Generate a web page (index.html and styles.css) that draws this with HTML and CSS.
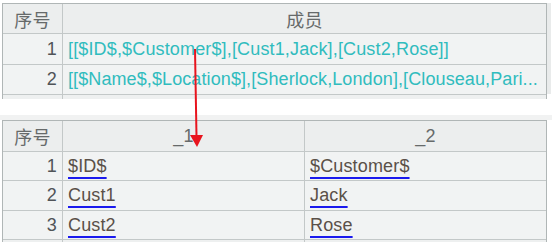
FILE: index.html
```html
<!DOCTYPE html>
<html lang="zh">
<head>
<meta charset="utf-8">
<title>序号 成员</title>
<link rel="stylesheet" href="styles.css">
</head>
<body>
<div class="page">
  <div class="frame frame-top">
    <div class="tbl tbl-two">
      <div class="cell head">序号</div>
      <div class="cell head">成员</div>
      <div class="cell num">1</div>
      <div class="cell val teal">[[$ID$,$Customer$],[Cust1,Jack],[Cust2,Rose]]</div>
      <div class="cell num">2</div>
      <div class="cell val teal tight">[[$Name$,$Location$],[Sherlock,London],[Clouseau,Pari...</div>
      <div class="cell stub"></div>
      <div class="cell stub"></div>
    </div>
    <div class="strip"></div>
  </div>

  <div class="frame frame-bottom">
    <div class="tbl tbl-three">
      <div class="cell head">序号</div>
      <div class="cell head">_1</div>
      <div class="cell head">_2</div>
      <div class="cell num">1</div>
      <div class="cell val"><span class="link">$ID$</span></div>
      <div class="cell val"><span class="link">$Customer$</span></div>
      <div class="cell num">2</div>
      <div class="cell val"><span class="link">Cust1</span></div>
      <div class="cell val"><span class="link">Jack</span></div>
      <div class="cell num">3</div>
      <div class="cell val"><span class="link">Cust2</span></div>
      <div class="cell val"><span class="link">Rose</span></div>
      <div class="cell stub"></div>
      <div class="cell stub"></div>
      <div class="cell stub"></div>
    </div>
  </div>

  <svg class="arrow" width="552" height="242" viewBox="0 0 552 242">
    <line x1="195" y1="49" x2="196.5" y2="137" stroke="#e8141e" stroke-width="2"/>
    <polygon points="190,135 203,135 197,147" fill="#e8141e"/>
  </svg>
</div>
</body>
</html>
```

FILE: styles.css
```css
html, body {
  margin: 0;
  padding: 0;
  background: #ffffff;
}

.page {
  position: relative;
  width: 552px;
  height: 242px;
  overflow: hidden;
  font-family: "Liberation Sans", "Noto Sans CJK SC", sans-serif;
  font-size: 18px;
  letter-spacing: 0.15px;
}

.frame {
  display: flex;
  padding-left: 2px;
}

.frame-top {
  padding-top: 3px;
  height: 96px;
  overflow: hidden;
}

.frame-bottom {
  margin-top: 16px;
  padding-top: 5px;
  background: linear-gradient(#f1f2f2, #f1f2f2) no-repeat 0 0 / 100% 5px;
}

.strip {
  width: 4px;
  height: 91px;
  background: #e9ebeb;
}

.tbl {
  display: grid;
  width: 543px;
  gap: 1px;
  background: #c3c8c8;
  border: 1px solid #b0b6b6;
  border-bottom: 0;
}

.tbl-two {
  grid-template-columns: 59px 483px;
  grid-template-rows: 29px 30px 29px 4px;
}

.tbl-three {
  grid-template-columns: 59px 241px 241px;
  grid-template-rows: 30px 28px 29px 28px 2px;
}

.cell {
  background: #f1f3f3;
  display: flex;
  align-items: center;
  white-space: nowrap;
  overflow: hidden;
}

.head {
  background: #eceeee;
  color: #666a6a;
  justify-content: center;
}

.num {
  justify-content: flex-end;
  padding-right: 5px;
  color: #505458;
}

.val {
  padding-left: 5px;
  color: #5a5048;
}

.teal {
  color: #30bcbe;
}

.tight {
  letter-spacing: 0.1px;
}

.link {
  text-decoration: underline;
  text-decoration-color: #1a1aee;
  text-decoration-thickness: 2px;
  text-underline-offset: 5px;
}

.stub {
  background: #eef0f0;
}

.arrow {
  position: absolute;
  left: 0;
  top: 0;
  pointer-events: none;
}
```
